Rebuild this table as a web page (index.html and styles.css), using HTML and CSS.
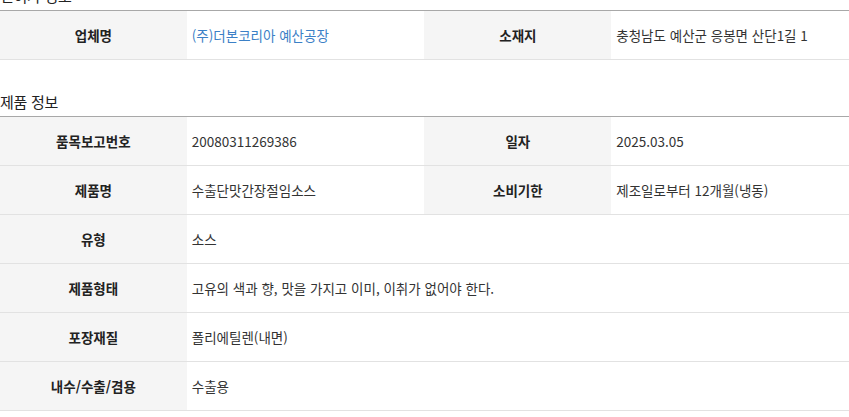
FILE: index.html
```html
<!DOCTYPE html>
<html lang="ko">
<head>
<meta charset="utf-8">
<title>제품 정보</title>
<link rel="stylesheet" href="styles.css">
</head>
<body>
<div class="page">
  <section class="section first">
    <h3 class="title">인허가 정보</h3>
    <table class="info">
      <colgroup><col class="c-th"><col class="c-td"><col class="c-th"><col class="c-td"></colgroup>
      <tr>
        <th>업체명</th>
        <td><a href="#" class="link">(주)더본코리아 예산공장</a></td>
        <th>소재지</th>
        <td>충청남도 예산군 응봉면 산단1길 1</td>
      </tr>
    </table>
  </section>
  <section class="section">
    <h3 class="title">제품 정보</h3>
    <table class="info">
      <colgroup><col class="c-th"><col class="c-td"><col class="c-th"><col class="c-td"></colgroup>
      <tr>
        <th>품목보고번호</th>
        <td>20080311269386</td>
        <th>일자</th>
        <td>2025.03.05</td>
      </tr>
      <tr>
        <th>제품명</th>
        <td>수출단맛간장절임소스</td>
        <th>소비기한</th>
        <td>제조일로부터 12개월(냉동)</td>
      </tr>
      <tr>
        <th>유형</th>
        <td colspan="3">소스</td>
      </tr>
      <tr>
        <th>제품형태</th>
        <td colspan="3">고유의 색과 향, 맛을 가지고 이미, 이취가 없어야 한다.</td>
      </tr>
      <tr>
        <th>포장재질</th>
        <td colspan="3">폴리에틸렌(내면)</td>
      </tr>
      <tr>
        <th>내수/수출/겸용</th>
        <td colspan="3">수출용</td>
      </tr>
    </table>
  </section>
</div>
</body>
</html>
```

FILE: styles.css
```css
html, body {
  margin: 0;
  padding: 0;
  background: #ffffff;
}
body {
  font-family: "Noto Sans CJK KR", "Noto Sans", sans-serif;
  color: #333333;
  overflow: hidden;
}
.page {
  margin-top: -14px;
}
.section + .section {
  margin-top: 32px;
}
.title {
  margin: 0 0 4px 0;
  font-size: 15px;
  line-height: 20px;
  font-weight: normal;
  color: #222222;
  letter-spacing: -0.3px;
}
.info {
  width: 100%;
  border-collapse: collapse;
  table-layout: fixed;
  border-top: 1px solid #a8a8a8;
}
.c-th { width: 22%; }
.c-td { width: 28%; }
.info th,
.info td {
  height: 49px;
  padding: 0 0 0 5px;
  border-bottom: 1px solid #e2e2e2;
  font-size: 13.5px;
  line-height: 20px;
  box-sizing: border-box;
  white-space: nowrap;
}
.info th {
  background: #f5f5f5;
  font-weight: bold;
  color: #222222;
  text-align: center;
  padding: 0;
}
.info td {
  text-align: left;
  color: #333333;
}
.link {
  color: #3b80c6;
  text-decoration: none;
}
```
